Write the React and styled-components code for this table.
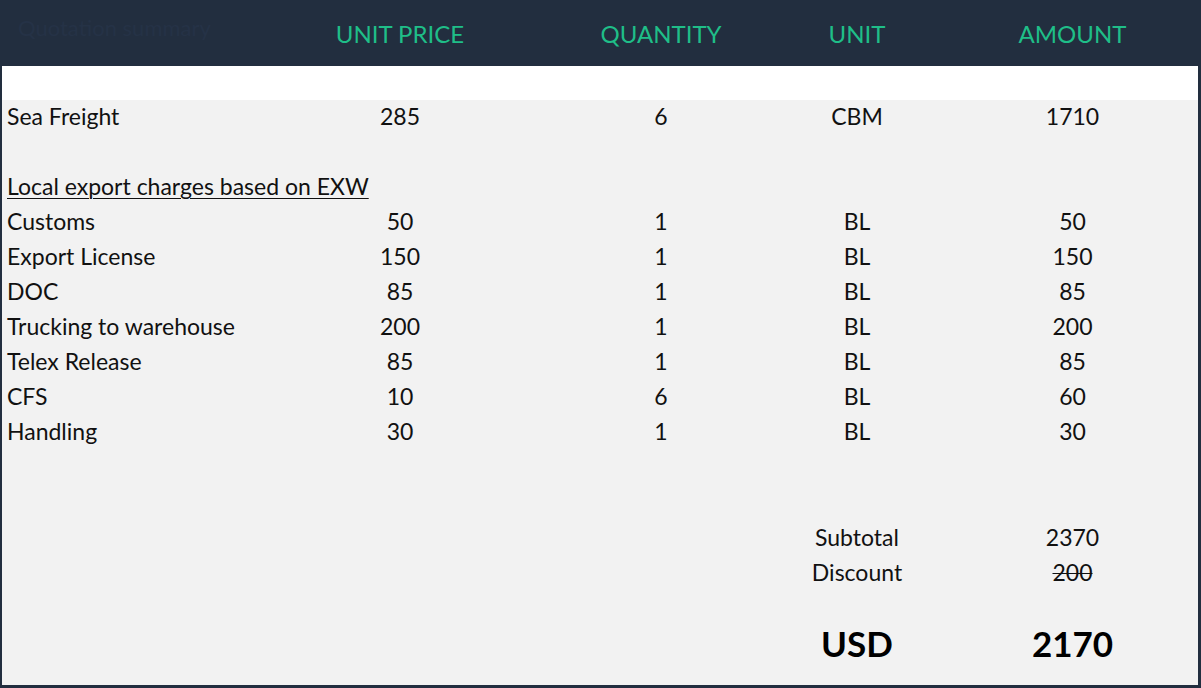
import React from 'react';
import styled, { createGlobalStyle } from 'styled-components';

const GlobalStyle = createGlobalStyle`
  html, body {
    margin: 0;
    padding: 0;
    background: #ffffff;
  }
  body {
    font-family: Lato, 'Open Sans', sans-serif;
  }
`;

const navy = '#222e3f';
const green = '#1fbe88';

const Sheet = styled.div`
  width: 1201px;
  height: 688px;
  box-sizing: border-box;
  background: #f2f2f2;
  border-left: 2px solid ${navy};
  border-right: 3px solid ${navy};
  border-bottom: 3px solid ${navy};
  display: flex;
  flex-direction: column;
`;

const cols = '243px 310px 212px 180px 1fr';

const Header = styled.div`
  display: grid;
  grid-template-columns: ${cols};
  align-items: center;
  height: 66px;
  margin: 0 -3px 0 -2px;
  padding: 0 3px 0 2px;
  background: ${navy};
  color: ${green};
  font-size: 24px;
`;

const Faint = styled.div`
  color: #253246;
  font-size: 22px;
  padding-left: 16px;
  white-space: nowrap;
  margin-top: -12px;
`;

const HeadCell = styled.div`
  text-align: center;
  text-transform: uppercase;
`;

const Spacer = styled.div`
  height: ${p => p.$h}px;
  flex-shrink: 0;
  background: ${p => (p.$white ? '#ffffff' : 'transparent')};
`;

const Row = styled.div`
  display: grid;
  grid-template-columns: ${cols};
  align-items: center;
  height: 35px;
  line-height: 35px;
  font-size: 23px;
  color: #111111;
  margin-top: -1px;
  margin-bottom: 1px;
`;

const Label = styled.div`
  padding-left: 5px;
  white-space: nowrap;
  text-decoration: ${p => (p.$underline ? 'underline' : 'none')};
  text-decoration-thickness: 1px;
  text-underline-offset: 3px;
`;

const Cell = styled.div`
  text-align: center;
  text-decoration: ${p => (p.$strike ? 'line-through' : 'none')};
  text-decoration-thickness: 1px;
`;

const TotalRow = styled(Row)`
  font-size: 35px;
  font-weight: 700;
  color: #000000;
  margin-top: 0;
`;

const items = [
  ['Customs', 50, 1, 'BL', 50],
  ['Export License', 150, 1, 'BL', 150],
  ['DOC', 85, 1, 'BL', 85],
  ['Trucking to warehouse', 200, 1, 'BL', 200],
  ['Telex Release', 85, 1, 'BL', 85],
  ['CFS', 10, 6, 'BL', 60],
  ['Handling', 30, 1, 'BL', 30]
];

const App = () => (
  <>
    <GlobalStyle />
    <Sheet>
      <Header>
        <Faint>Quotation summary</Faint>
        <HeadCell>Unit Price</HeadCell>
        <HeadCell>Quantity</HeadCell>
        <HeadCell>Unit</HeadCell>
        <HeadCell>Amount</HeadCell>
      </Header>
      <Spacer $h={34} $white />
      <Row>
        <Label>Sea Freight</Label>
        <Cell>285</Cell>
        <Cell>6</Cell>
        <Cell>CBM</Cell>
        <Cell>1710</Cell>
      </Row>
      <Spacer $h={35} />
      <Row>
        <Label $underline>Local export charges based on EXW</Label>
      </Row>
      {items.map(([name, price, qty, unit, amount]) => (
        <Row key={name}>
          <Label>{name}</Label>
          <Cell>{price}</Cell>
          <Cell>{qty}</Cell>
          <Cell>{unit}</Cell>
          <Cell>{amount}</Cell>
        </Row>
      ))}
      <Spacer $h={71} />
      <Row>
        <span />
        <span />
        <span />
        <Cell>Subtotal</Cell>
        <Cell>2370</Cell>
      </Row>
      <Row>
        <span />
        <span />
        <span />
        <Cell>Discount</Cell>
        <Cell $strike>200</Cell>
      </Row>
      <Spacer $h={35} />
      <TotalRow>
        <span />
        <span />
        <span />
        <Cell>USD</Cell>
        <Cell>2170</Cell>
      </TotalRow>
    </Sheet>
  </>
);

export default App;
